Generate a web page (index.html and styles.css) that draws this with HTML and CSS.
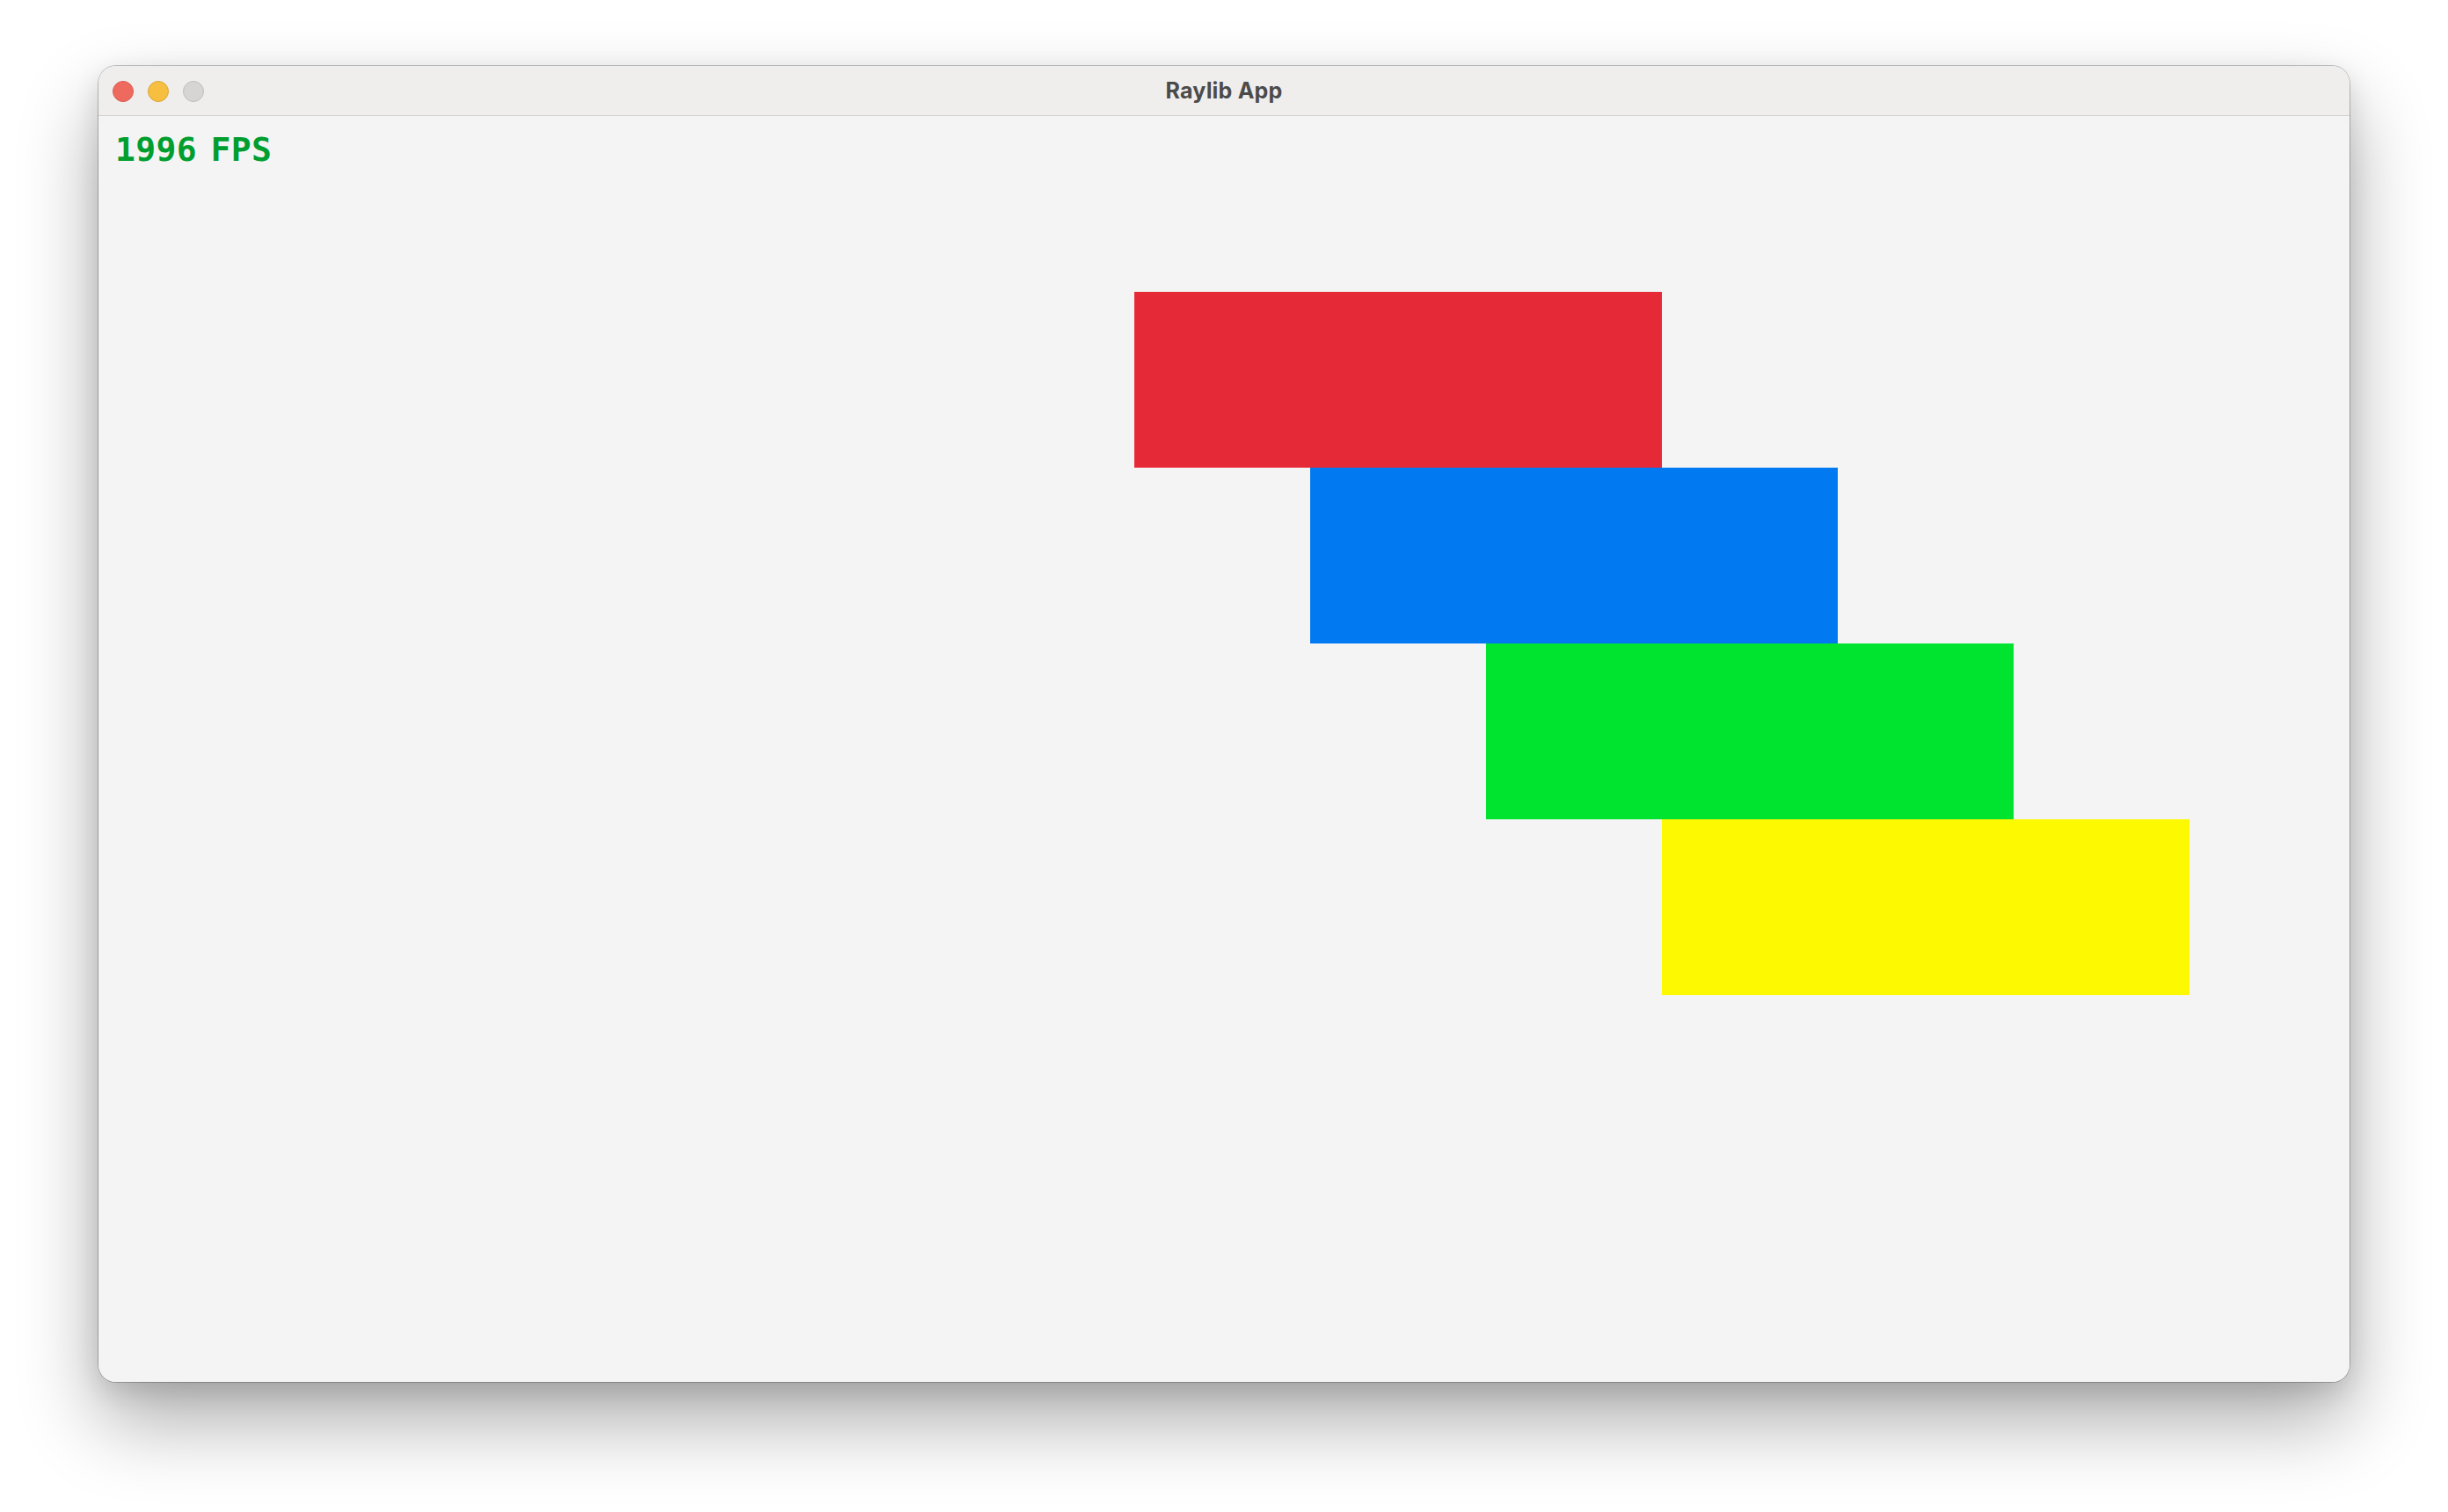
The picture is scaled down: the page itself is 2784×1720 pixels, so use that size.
FILE: index.html
```html
<!DOCTYPE html>
<html>
<head>
<meta charset="utf-8">
<title>Raylib App</title>
<link rel="stylesheet" href="styles.css">
</head>
<body>
<div class="window">
  <div class="titlebar">
    <div class="lights">
      <span class="light close"></span>
      <span class="light min"></span>
      <span class="light max"></span>
    </div>
    <div class="title">Raylib App</div>
  </div>
  <div class="canvas">
    <div class="fps">1996 FPS</div>
    <div class="rect red"></div>
    <div class="rect blue"></div>
    <div class="rect green"></div>
    <div class="rect yellow"></div>
  </div>
</div>
</body>
</html>
```
FILE: styles.css
```css
html, body {
  margin: 0;
  padding: 0;
  background: #ffffff;
}
body {
  width: 2784px;
  height: 1720px;
  overflow: hidden;
  padding-top: 75px;
  box-sizing: border-box;
}
.window {
  margin-left: 112px;
  width: 2560px;
  border-radius: 20px;
  overflow: hidden;
  background: #f4f4f4;
  box-shadow: 0 0 0 1px rgba(0,0,0,0.22), 0 44px 90px rgba(0,0,0,0.33), 0 10px 30px rgba(0,0,0,0.12);
}
.titlebar {
  position: relative;
  height: 56px;
  background: #efeeed;
  border-bottom: 1px solid #d2d1d0;
  display: flex;
  align-items: center;
  justify-content: center;
}
.lights {
  position: absolute;
  left: 16px;
  top: 17px;
  display: flex;
  gap: 16px;
}
.light {
  width: 22px;
  height: 22px;
  border-radius: 50%;
  border: 1px solid;
  display: block;
}
.close { background: #ef6a5e; border-color: #d95b50; }
.min { background: #f6bf3f; border-color: #dba53a; }
.max { background: #d6d5d4; border-color: #bfbebd; }
.title {
  font-family: Inter, "Open Sans", "Liberation Sans", sans-serif;
  font-weight: 700;
  font-size: 25px;
  color: #4b4b4b;
  letter-spacing: 0.2px;
}
.canvas {
  position: relative;
  height: 1440px;
  background: #f4f4f4;
}
.fps {
  position: absolute;
  left: 19px;
  top: 19px;
  font-family: "DejaVu Sans Mono", "Liberation Mono", monospace;
  font-weight: 700;
  font-size: 38px;
  line-height: 38px;
  color: #009e2f;
  letter-spacing: 0.4px;
  word-spacing: -8px;
}
.rect {
  position: absolute;
  width: 600px;
  height: 200px;
}
.red { left: 1178px; top: 200px; background: #e62937; }
.blue { left: 1378px; top: 400px; background: #0079f1; }
.green { left: 1578px; top: 600px; background: #00e430; }
.yellow { left: 1778px; top: 800px; background: #fdf900; }
```
